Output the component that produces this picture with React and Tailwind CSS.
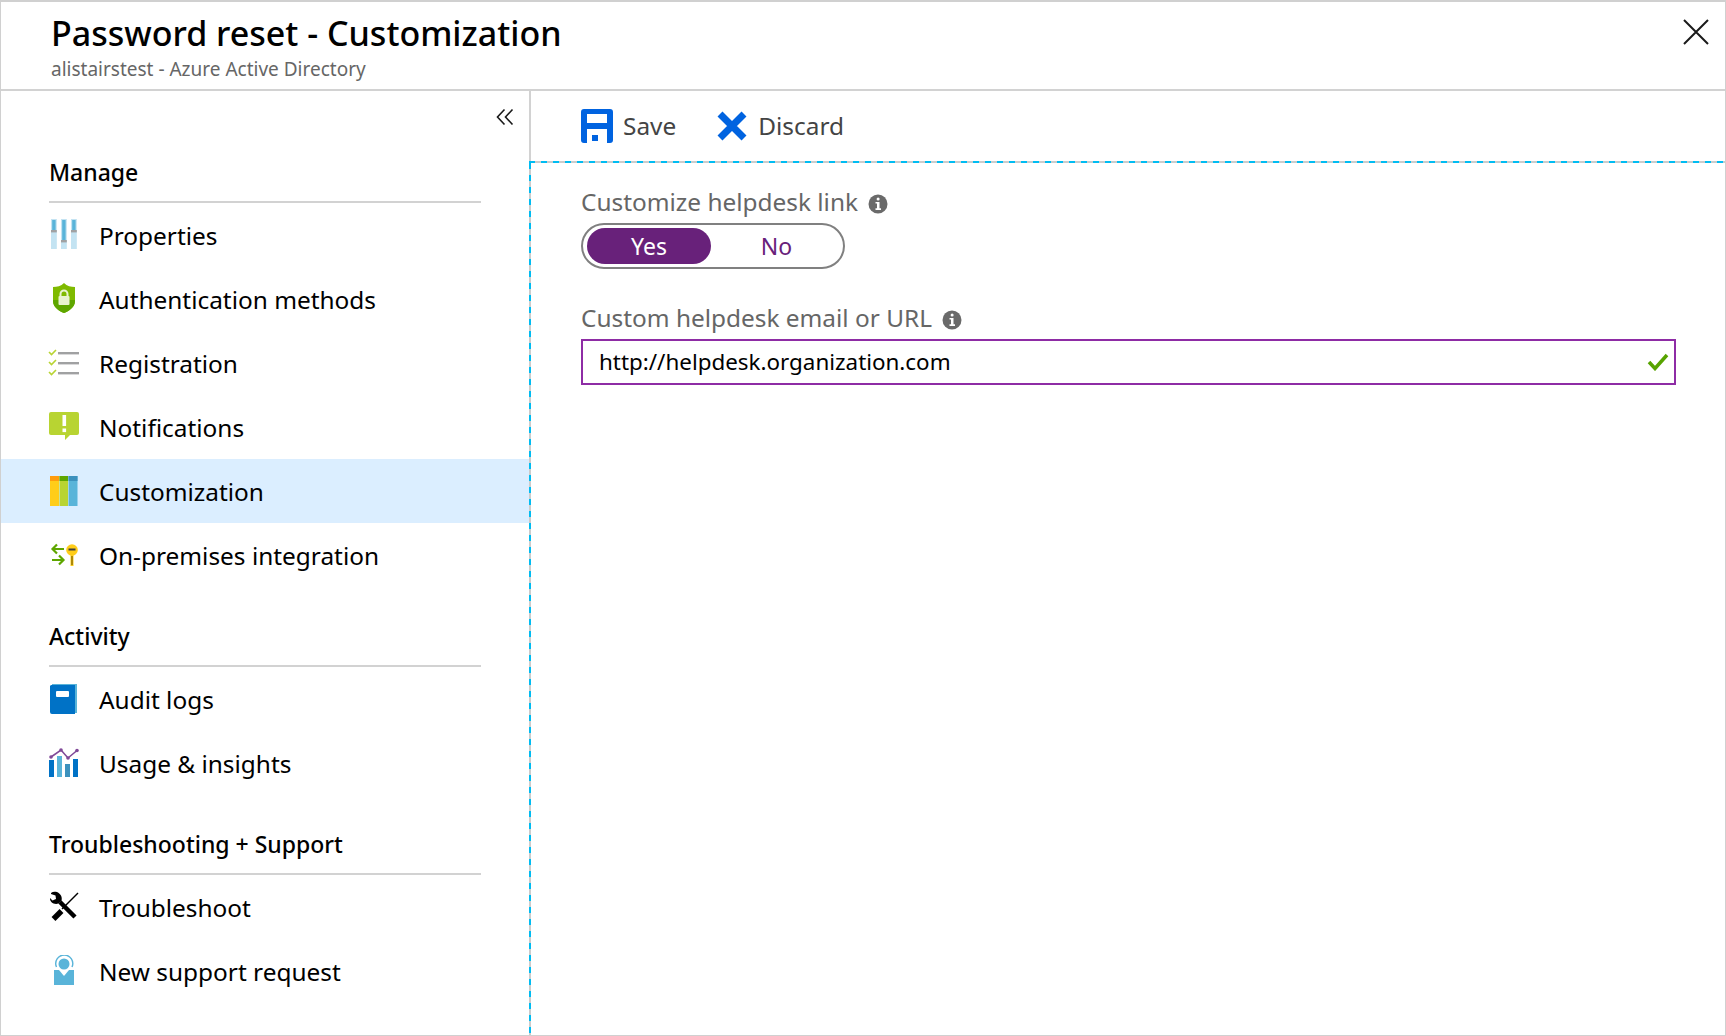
import React from "react";

const font = "font-['Noto_Sans','Open_Sans',sans-serif]";

const PropertiesIcon = () => (
  <svg width="32" height="32" viewBox="0 0 32 32">
    <rect x="3" y="0" width="5.8" height="30" fill="#c3e3f2" />
    <rect x="13" y="0" width="5.8" height="30" fill="#c3e3f2" />
    <rect x="23" y="0" width="5.8" height="30" fill="#c3e3f2" />
    <rect x="4.2" y="1" width="3.4" height="10" fill="#59b4d9" />
    <rect x="14.2" y="1" width="3.4" height="20" fill="#59b4d9" />
    <rect x="24.2" y="1" width="3.4" height="10" fill="#59b4d9" />
    <rect x="3" y="11" width="5.8" height="2.4" fill="#a0a1a2" />
    <rect x="13" y="21" width="5.8" height="2.4" fill="#a0a1a2" />
    <rect x="23" y="11" width="5.8" height="2.4" fill="#a0a1a2" />
  </svg>
);

const ShieldIcon = () => (
  <svg width="32" height="32" viewBox="0 0 32 32">
    <path d="M16 0 C19 3 23 4 27 4 L27 18 C27 24 21 28 16 30 C11 28 5 24 5 18 L5 4 C9 4 13 3 16 0 Z" fill="#7fba00" />
    <path d="M5 17 H27 V18 C27 24 21 28 16 30 C11 28 5 24 5 18 Z" fill="#5ea600" />
    <rect x="10.5" y="13" width="11" height="9" rx="1" fill="#e8f3d0" />
    <path d="M12.5 13 V11 a3.5 3.5 0 0 1 7 0 V13" fill="none" stroke="#e8f3d0" strokeWidth="2" />
  </svg>
);

const RegistrationIcon = () => (
  <svg width="32" height="32" viewBox="0 0 32 32">
    <path d="M1 5 L3.5 7.5 L8 3 M1 15 L3.5 17.5 L8 13 M1 25 L3.5 27.5 L8 23" fill="none" stroke="#b8d432" strokeWidth="1.6" />
    <rect x="10" y="5" width="21" height="2.4" fill="#a0a1a2" />
    <rect x="10" y="15" width="21" height="2.4" fill="#a0a1a2" />
    <rect x="10" y="25" width="21" height="2.4" fill="#a0a1a2" />
  </svg>
);

const NotificationIcon = () => (
  <svg width="32" height="32" viewBox="0 0 32 32">
    <path d="M3 1 H29 a2 2 0 0 1 2 2 V22 a2 2 0 0 1 -2 2 H22 L17 29 V24 H3 a2 2 0 0 1 -2 -2 V3 a2 2 0 0 1 2 -2 Z" fill="#b8d432" />
    <rect x="14.5" y="4" width="3.6" height="11" fill="#fff" />
    <rect x="14.5" y="17.5" width="3.6" height="3.6" fill="#fff" />
  </svg>
);

const CustomizationIcon = () => (
  <svg width="32" height="32" viewBox="0 0 32 32">
    <rect x="2" y="1" width="9" height="30" fill="#ffcd19" />
    <rect x="11.5" y="1" width="8.5" height="30" fill="#b8d432" />
    <rect x="20.5" y="1" width="9" height="30" fill="#59b4d9" />
    <rect x="2" y="1" width="9" height="5" fill="#ff9c0d" />
    <rect x="11.5" y="1" width="8.5" height="5" fill="#5ea600" />
    <rect x="20.5" y="1" width="9" height="5" fill="#3c91bd" />
  </svg>
);

const OnPremIcon = () => (
  <svg width="32" height="32" viewBox="0 0 32 32">
    <path d="M16 10 H5 M9 5.5 L4.5 10 L9 14.5 M4 21 H15 M11 16.5 L15.5 21 L11 25.5" fill="none" stroke="#5ea600" strokeWidth="2.2" />
    <circle cx="24" cy="11" r="5.8" fill="#ffcd19" />
    <rect x="22.5" y="15" width="3" height="12" fill="#ffcd19" />
    <rect x="20.5" y="9.5" width="7" height="2" fill="#3e3e3e" />
    <rect x="23.3" y="17" width="1.4" height="9" fill="#8a6d00" />
  </svg>
);

const AuditIcon = () => (
  <svg width="32" height="32" viewBox="0 0 32 32">
    <path d="M4 1 H29 V30 H26 V3 H4 Z" fill="#59b4d9" />
    <path d="M2 3 a2 2 0 0 1 2 -1 H27 V31 H4 a2 2 0 0 1 -2 -2 Z" fill="#0072c6" />
    <rect x="8" y="8" width="13" height="6" rx="1" fill="#fff" />
  </svg>
);

const UsageIcon = () => (
  <svg width="32" height="32" viewBox="0 0 32 32">
    <rect x="1" y="13" width="5" height="17" fill="#0072c6" />
    <rect x="9" y="9" width="5" height="21" fill="#59b4d9" />
    <rect x="17" y="17" width="5" height="13" fill="#3c91bd" />
    <rect x="25" y="12" width="5" height="18" fill="#0072c6" />
    <path d="M3 10 L13 3 L20 11 L29 3.5" fill="none" stroke="#804998" strokeWidth="1.6" />
    <circle cx="3" cy="10" r="1.8" fill="#804998" />
    <circle cx="13" cy="3" r="1.8" fill="#804998" />
    <circle cx="20" cy="11" r="1.8" fill="#804998" />
    <circle cx="29" cy="3.5" r="1.8" fill="#804998" />
  </svg>
);

const TroubleshootIcon = () => (
  <svg width="32" height="32" viewBox="0 0 32 32">
    <path d="M30 2 L14 18" fill="none" stroke="#000" strokeWidth="1.5" />
    <path d="M13.5 20 L5.5 28" fill="none" stroke="#000" strokeWidth="5.5" />
    <path d="M12 11 L27 26" fill="none" stroke="#000" strokeWidth="4.5" />
    <path d="M9 1 C5 0 2.5 1.5 3 3 L7.5 4.5 L8 8 L4.5 9.5 L2 7 C1.5 11 6 14 10.5 12.5 L13.5 10 C14.5 6 13 3 9 1 Z" fill="#000" />
  </svg>
);

const SupportIcon = () => (
  <svg width="32" height="32" viewBox="0 0 32 32">
    <rect x="6" y="15" width="20" height="15" fill="#59b4d9" />
    <path d="M11 15 L16 21 L21 15 Z" fill="#fff" />
    <circle cx="16" cy="9" r="5.5" fill="#59b4d9" />
    <path d="M8.5 12 A8.5 8.5 0 1 1 24 12" fill="none" stroke="#59b4d9" strokeWidth="1.4" />
  </svg>
);

const InfoIcon = () => (
  <svg width="20" height="20" viewBox="0 0 20 20" className="mt-[4px]">
    <circle cx="10" cy="10" r="9.5" fill="#6a6a6a" />
    <rect x="8.6" y="3.4" width="3" height="3" rx="1.5" fill="#fff" />
    <path d="M7.5 8 H11.5 V14.3 H13 V16 H7.5 V14.3 H9 V9.6 H7.5 Z" fill="#fff" />
  </svg>
);

const sections = [
  {
    title: "Manage",
    items: [
      { label: "Properties", icon: <PropertiesIcon /> },
      { label: "Authentication methods", icon: <ShieldIcon /> },
      { label: "Registration", icon: <RegistrationIcon /> },
      { label: "Notifications", icon: <NotificationIcon /> },
      { label: "Customization", icon: <CustomizationIcon />, active: true },
      { label: "On-premises integration", icon: <OnPremIcon /> },
    ],
  },
  {
    title: "Activity",
    items: [
      { label: "Audit logs", icon: <AuditIcon /> },
      { label: "Usage & insights", icon: <UsageIcon /> },
    ],
  },
  {
    title: "Troubleshooting + Support",
    items: [
      { label: "Troubleshoot", icon: <TroubleshootIcon /> },
      { label: "New support request", icon: <SupportIcon /> },
    ],
  },
];

const App = () => {
  return (
    <div className={`${font} w-[1726px] h-[1036px] overflow-hidden bg-white border border-[#d0d0d0] border-t-2 text-black flex flex-col`}>
      {/* Header */}
      <div className="h-[89px] shrink-0 border-b-2 border-[#d2d2d2] flex justify-between pl-[50px] pr-[16px]">
        <div>
          <h1 className="text-[34px] leading-[46px] mt-[8px] font-medium">Password reset - Customization</h1>
          <p className="text-[19px] leading-[24px] mt-[1px] text-[#666]">alistairstest - Azure Active Directory</p>
        </div>
        <svg width="26" height="26" viewBox="0 0 26 26" className="mt-[17px]">
          <path d="M1 1 L25 25 M25 1 L1 25" stroke="#1a1a1a" strokeWidth="2" fill="none" />
        </svg>
      </div>

      <div className="flex-1 flex min-h-0">
        {/* Sidebar */}
        <div className="w-[528px] shrink-0">
          <div className="flex justify-end pr-[15px] pt-[17px] h-[56px]">
            <svg width="18" height="18" viewBox="0 0 18 18">
              <path d="M8.5 1.5 L1.5 9 L8.5 16.5 M16.5 1.5 L9.5 9 L16.5 16.5" stroke="#1a1a1a" strokeWidth="1.6" fill="none" />
            </svg>
          </div>
          {sections.map((section) => (
            <div key={section.title} className="mb-[24px]">
              <div className="mx-[48px] h-[56px] border-b-2 border-[#d2d2d2] flex items-center text-[23px] font-medium">
                <span className="mt-[-4px]">{section.title}</span>
              </div>
              {section.items.map((item) => (
                <div
                  key={item.label}
                  className={`h-[64px] flex items-center pl-[47px] gap-[19px] text-[24.4px] ${item.active ? "bg-[#dbeeff]" : ""}`}
                >
                  {item.icon}
                  <span className="mt-[2px]">{item.label}</span>
                </div>
              ))}
            </div>
          ))}
        </div>

        {/* Content */}
        <div className="flex-1 flex flex-col min-w-0">
          <div className="h-[70px] shrink-0 border-l-2 border-[#d2d2d2] flex items-center pl-[50px] gap-[41px] text-[24.4px] text-[#444]">
            <div className="flex items-center gap-[10px]">
              <svg width="32" height="34" viewBox="0 0 32 34">
                <path d="M3 0 H29 a3 3 0 0 1 3 3 V31 a3 3 0 0 1 -3 3 H3 a3 3 0 0 1 -3 -3 V3 a3 3 0 0 1 3 -3 Z M6 5 V14 H26 V5 Z M6 20 V34 H26 V20 Z" fill="#0063e0" fillRule="evenodd" />
                <rect x="11" y="26" width="6" height="6" fill="#0063e0" />
              </svg>
              <span className="mt-[1px]">Save</span>
            </div>
            <div className="flex items-center gap-[11px]">
              <svg width="30" height="30" viewBox="0 0 30 30">
                <path d="M3 3 L27 27 M27 3 L3 27" stroke="#0063e0" strokeWidth="7" fill="none" />
              </svg>
              <span className="mt-[1px]">Discard</span>
            </div>
          </div>
          <div className="h-[2px] shrink-0 bg-[repeating-linear-gradient(90deg,#00bcf2_0,#00bcf2_6px,#cccccc_6px,#cccccc_12px)]" />
          <div className="flex-1 flex min-h-0">
            <div className="w-[2px] shrink-0 bg-[repeating-linear-gradient(180deg,#00bcf2_0,#00bcf2_6px,#cccccc_6px,#cccccc_12px)]" />
            <div className="flex-1 pl-[50px] pr-[49px] pt-[22px]">
              <div className="flex items-center gap-[10px] text-[24.4px] leading-[34px] text-[#666]">
                <span>Customize helpdesk link</span>
                <InfoIcon />
              </div>
              <div className="mt-[4px] w-[264px] h-[46px] rounded-full border-2 border-[#808080] flex items-center p-[4px] text-[23px]">
                <div className="w-[124px] h-[36px] rounded-full bg-[#68217a] text-white flex items-center justify-center">Yes</div>
                <div className="flex-1 text-[#68217a] text-center pl-[3px] pt-[1px]">No</div>
              </div>
              <div className="mt-[32px] flex items-center gap-[10px] text-[24.4px] leading-[34px] text-[#666]">
                <span>Custom helpdesk email or URL</span>
                <InfoIcon />
              </div>
              <div className="mt-[4px] h-[46px] border-2 border-[#8e2ca5] flex items-center justify-between pl-[16px] pr-[5px] text-[22.4px]">
                <span>http://helpdesk.organization.com</span>
                <svg width="22" height="18" viewBox="0 0 22 18">
                  <path d="M2 9 L8 15.5 L20 2" stroke="#57a300" strokeWidth="3.5" fill="none" />
                </svg>
              </div>
            </div>
          </div>
        </div>
      </div>
    </div>
  );
};

export default App;
